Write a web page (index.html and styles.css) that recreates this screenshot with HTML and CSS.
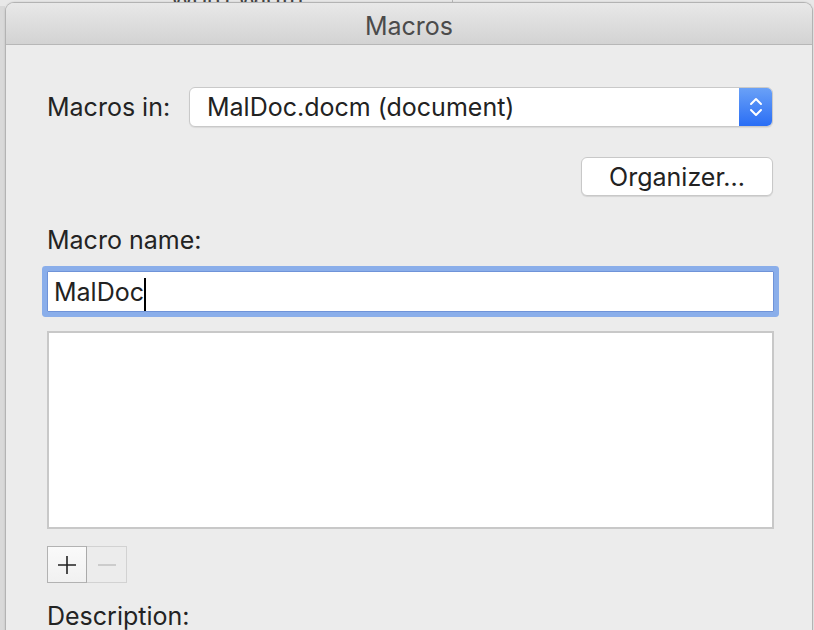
FILE: index.html
```html
<!DOCTYPE html>
<html lang="en">
<head>
    <meta charset="UTF-8">
    <meta name="viewport" content="width=device-width, initial-scale=1.0">
    <title>Macros</title>
    <link rel="stylesheet" href="styles.css">
</head>
<body>
    <div class="desktop">
        <div class="behind">
            <span class="behind-text">Word Width</span>
            <span class="behind-line line-a"></span>
            <span class="behind-line line-b"></span>
        </div>

        <div class="window">
            <div class="titlebar">Macros</div>

            <div class="content">
                <div class="row-macros-in">
                    <span class="label">Macros in:</span>
                    <div class="popup">
                        <span class="popup-value">MalDoc.docm (document)</span>
                        <span class="stepper">
                            <svg width="14" height="22" viewBox="0 0 14 22">
                                <path d="M2 8 L7 3 L12 8" fill="none" stroke="#fff" stroke-width="2" stroke-linecap="round" stroke-linejoin="round"/>
                                <path d="M2 14 L7 19 L12 14" fill="none" stroke="#fff" stroke-width="2" stroke-linecap="round" stroke-linejoin="round"/>
                            </svg>
                        </span>
                    </div>
                </div>

                <div class="row-organizer">
                    <button class="btn">Organizer...</button>
                </div>

                <div class="label name-label">Macro name:</div>
                <div class="name-field">
                    <span class="name-text">MalDoc</span><span class="caret"></span>
                </div>

                <div class="macro-list"></div>

                <div class="plus-minus">
                    <span class="pm plus">
                        <svg width="20" height="20" viewBox="0 0 20 20">
                            <path d="M10 1 V19 M1 10 H19" stroke="#222" stroke-width="1.6"/>
                        </svg>
                    </span>
                    <span class="pm minus">
                        <svg width="20" height="20" viewBox="0 0 20 20">
                            <path d="M1 10 H19" stroke="#c4c4c4" stroke-width="1.6"/>
                        </svg>
                    </span>
                </div>

                <div class="label desc-label">Description:</div>
            </div>
        </div>
    </div>
</body>
</html>
```

FILE: styles.css
```css
html, body {
    margin: 0;
    padding: 0;
    overflow: hidden;
}

body {
    font-family: Inter, "Liberation Sans", sans-serif;
    background-color: #d6d6d6;
    color: #222;
    width: 814px;
    height: 630px;
}

.desktop {
    position: relative;
    width: 814px;
    height: 630px;
    background: linear-gradient(to right, #d9d9d9 0, #d9d9d9 5px, #e9e9e9 5px);
}

.behind {
    position: absolute;
    left: 0;
    top: 0;
    width: 814px;
    height: 6px;
    overflow: hidden;
    background: #e8e8e8;
}

.behind-text {
    position: absolute;
    left: 170px;
    top: -16px;
    font-size: 24px;
    color: #444;
}

.behind-line {
    position: absolute;
    top: 0;
    width: 1px;
    height: 6px;
    background: #b8b8b8;
}

.line-a {
    left: 257px;
}

.line-b {
    left: 452px;
}

.window {
    position: absolute;
    left: 5px;
    top: 2px;
    width: 806px;
    height: 640px;
    background: #ececec;
    border: 1px solid #b3b3b3;
    border-bottom: none;
    border-radius: 9px 9px 0 0;
    overflow: hidden;
    box-shadow: 0 0 2px rgba(0, 0, 0, 0.15);
}

.titlebar {
    height: 41px;
    border-bottom: 1px solid #b7b7b7;
    background: linear-gradient(to bottom, #e8e8e8, #d3d3d3);
    text-align: center;
    line-height: 46px;
    font-size: 25px;
    color: #4b4b4b;
}

.content {
    padding: 42px 38px 0 41px;
}

.label {
    font-size: 25px;
    line-height: 30px;
    color: #232323;
}

.row-macros-in {
    display: flex;
    align-items: center;
    height: 40px;
}

.row-macros-in .label {
    width: 142px;
    flex: none;
}

.popup {
    display: flex;
    width: 584px;
    height: 40px;
    box-sizing: border-box;
    background: #fff;
    border: 1px solid #c9c9c9;
    border-radius: 6px;
    overflow: hidden;
    box-shadow: 0 1px 1px rgba(0, 0, 0, 0.08);
}

.popup-value {
    flex: 1;
    padding-left: 17px;
    font-size: 25px;
    line-height: 38px;
    color: #222;
}

.stepper {
    width: 33px;
    display: flex;
    align-items: center;
    justify-content: center;
    background: linear-gradient(to bottom, #6aa1f7, #2a6ef5);
}

.row-organizer {
    display: flex;
    justify-content: flex-end;
    margin-top: 30px;
    padding-right: 1px;
}

.btn {
    width: 192px;
    height: 39px;
    font-family: inherit;
    font-size: 25px;
    color: #222;
    background: #fff;
    border: 1px solid #c8c8c8;
    border-radius: 6px;
    box-shadow: 0 1px 1px rgba(0, 0, 0, 0.1);
    padding: 0;
}

.name-label {
    margin-top: 29px;
}

.name-field {
    margin-top: 16px;
    height: 41px;
    box-sizing: border-box;
    background: #fff;
    border: 1px solid #6f93d8;
    box-shadow: 0 0 0 5px #8aaeea;
    border-radius: 1px;
    display: flex;
    align-items: center;
    padding-left: 6px;
}

.name-text {
    font-size: 25px;
    color: #222;
}

.caret {
    display: inline-block;
    width: 2px;
    height: 33px;
    background: #000;
    margin-top: 6px;
}

.macro-list {
    margin-top: 19px;
    height: 194px;
    width: 723px;
    background: #fff;
    border: 2px solid #c8c8c8;
}

.plus-minus {
    display: flex;
    margin-top: 17px;
}

.pm {
    width: 40px;
    height: 37px;
    box-sizing: border-box;
    display: flex;
    align-items: center;
    justify-content: center;
}

.plus {
    background: linear-gradient(to bottom, #fafafa, #f1f1f1);
    border: 1px solid #b2b2b2;
    border-right: 1px solid #aaa;
}

.minus {
    border: 1px solid #d2d2d2;
    border-left: none;
}

.desc-label {
    margin-top: 18px;
}
```
